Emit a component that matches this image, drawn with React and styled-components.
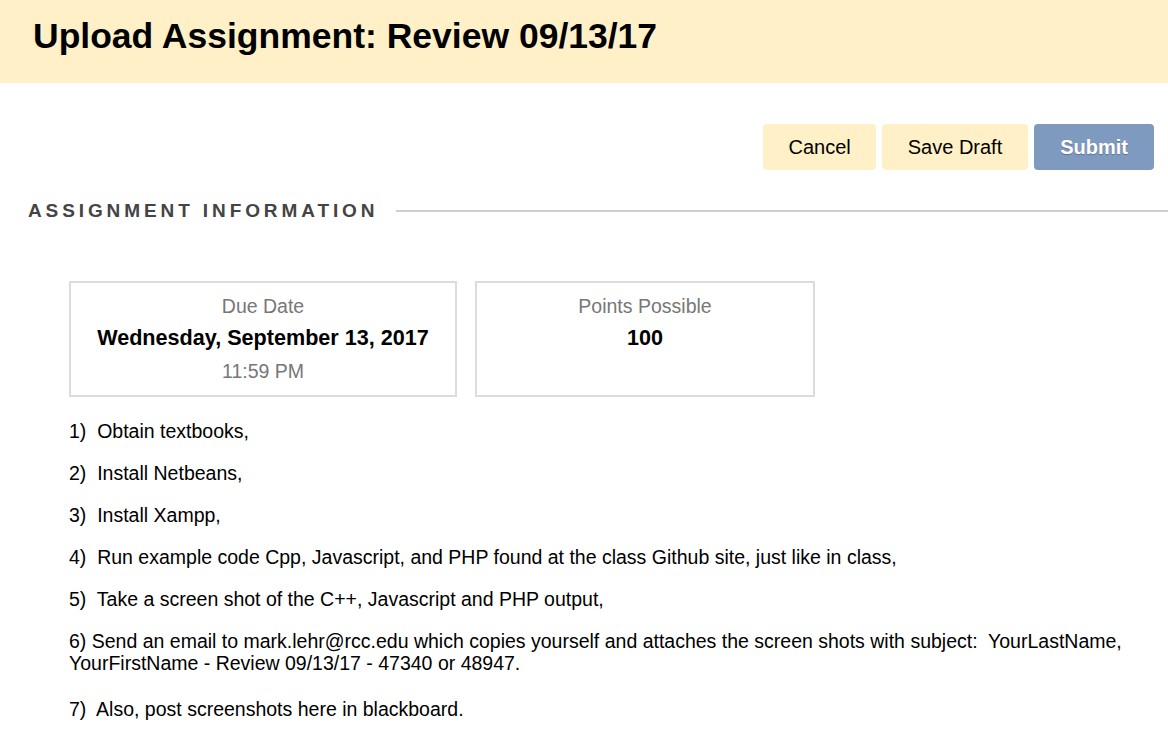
import styled, { createGlobalStyle } from "styled-components"

const Global = createGlobalStyle`
  body {
    margin: 0;
    background: #fff;
    font-family: "Liberation Sans", Arial, sans-serif;
    color: #000;
  }
`

const Page = styled.div`
  width: 1168px;
  min-height: 742px;
  overflow: hidden;
`

const Header = styled.header`
  height: 83px;
  background: #fff0c7;
  display: flex;
  align-items: center;
  padding-left: 33px;
  box-sizing: border-box;
`

const Title = styled.h1`
  margin: 0 0 11px;
  font-size: 35.5px;
  font-weight: 700;
`

const Actions = styled.div`
  display: flex;
  justify-content: flex-end;
  gap: 6px;
  padding: 41px 14px 0 0;
`

const Button = styled.button`
  height: 46px;
  padding: 0 ${p => p.$pad}px;
  border: none;
  border-radius: 4px;
  font-family: inherit;
  font-size: 20px;
  background: ${p => (p.$primary ? "#7f9abf" : "#fff0c7")};
  color: ${p => (p.$primary ? "#fff" : "#000")};
  font-weight: ${p => (p.$primary ? 700 : 400)};
  text-shadow: ${p => (p.$primary ? "0 1px 1px rgba(0,0,0,0.25)" : "none")};
  cursor: pointer;
`

const SectionHead = styled.div`
  display: flex;
  align-items: center;
  margin-top: 30px;
  padding-left: 28px;
  gap: 18px;
`

const SectionTitle = styled.h2`
  margin: 0;
  font-size: 19px;
  font-weight: 700;
  letter-spacing: 3.9px;
  color: #444;
`

const Rule = styled.div`
  flex: 1;
  height: 2px;
  background: #cfcfcf;
`

const Body = styled.div`
  padding: 59px 20px 0 69px;
`

const Cards = styled.div`
  display: flex;
  gap: 18px;
`

const Card = styled.div`
  width: ${p => p.$w}px;
  height: 116px;
  box-sizing: border-box;
  border: 2px solid #dcdcdc;
  display: flex;
  flex-direction: column;
  align-items: center;
  padding-top: 12px;
`

const Label = styled.div`
  font-size: 19.5px;
  color: #777;
  line-height: 22px;
`

const Value = styled.div`
  font-size: 21.6px;
  font-weight: 700;
  line-height: 26px;
  margin: 8px 0 9px;
`

const List = styled.div`
  padding-top: 23px;
  font-size: 19.5px;
  line-height: 22px;
`

const Item = styled.p`
  margin: 0 0 ${p => (p.$wide ? 24 : 20)}px;
  white-space: pre-wrap;
`

const items = [
  "1)  Obtain textbooks,",
  "2)  Install Netbeans,",
  "3)  Install Xampp,",
  "4)  Run example code Cpp, Javascript, and PHP found at the class Github site, just like in class,",
  "5)  Take a screen shot of the C++, Javascript and PHP output,",
  "6) Send an email to mark.lehr@rcc.edu which copies yourself and attaches the screen shots with subject:  YourLastName, YourFirstName - Review 09/13/17 - 47340 or 48947.",
  "7)  Also, post screenshots here in blackboard.",
]

const App = () => {
  return (
    <Page>
      <Global />
      <Header>
        <Title>Upload Assignment: Review 09/13/17</Title>
      </Header>
      <Actions>
        <Button $pad={25}>Cancel</Button>
        <Button $pad={26}>Save Draft</Button>
        <Button $pad={26} $primary>Submit</Button>
      </Actions>
      <SectionHead>
        <SectionTitle>ASSIGNMENT INFORMATION</SectionTitle>
        <Rule />
      </SectionHead>
      <Body>
        <Cards>
          <Card $w={388}>
            <Label>Due Date</Label>
            <Value>Wednesday, September 13, 2017</Value>
            <Label>11:59 PM</Label>
          </Card>
          <Card $w={340}>
            <Label>Points Possible</Label>
            <Value>100</Value>
          </Card>
        </Cards>
        <List>
          {items.map((t, i) => (
            <Item key={t} $wide={i === 5}>{t}</Item>
          ))}
        </List>
      </Body>
    </Page>
  )
}

export default App
